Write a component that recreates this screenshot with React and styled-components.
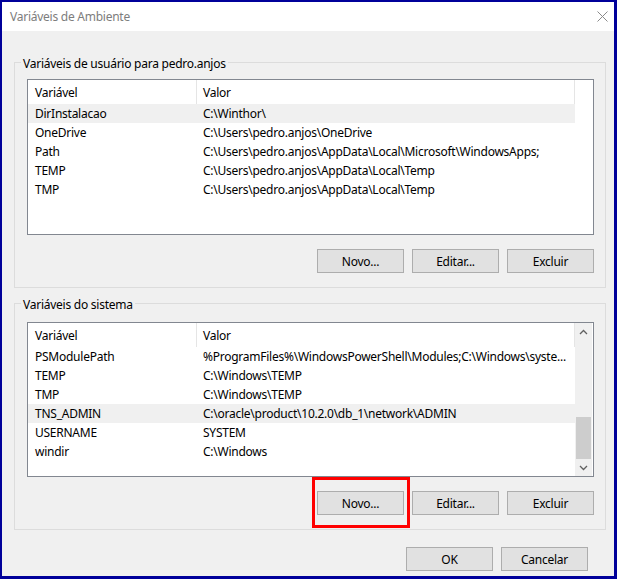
import React from 'react'
import styled, { createGlobalStyle } from 'styled-components'

const GlobalStyle = createGlobalStyle`
  html, body {
    margin: 0;
    padding: 0;
    background: #f0f0f0;
  }
  * {
    box-sizing: border-box;
  }
`

const userVars = [
  { name: 'DirInstalacao', value: 'C:\\Winthor\\', selected: true },
  { name: 'OneDrive', value: 'C:\\Users\\pedro.anjos\\OneDrive' },
  { name: 'Path', value: 'C:\\Users\\pedro.anjos\\AppData\\Local\\Microsoft\\WindowsApps;' },
  { name: 'TEMP', value: 'C:\\Users\\pedro.anjos\\AppData\\Local\\Temp' },
  { name: 'TMP', value: 'C:\\Users\\pedro.anjos\\AppData\\Local\\Temp' },
]

const systemVars = [
  { name: 'PSModulePath', value: '%ProgramFiles%\\WindowsPowerShell\\Modules;C:\\Windows\\syste...' },
  { name: 'TEMP', value: 'C:\\Windows\\TEMP' },
  { name: 'TMP', value: 'C:\\Windows\\TEMP' },
  { name: 'TNS_ADMIN', value: 'C:\\oracle\\product\\10.2.0\\db_1\\network\\ADMIN', selected: true },
  { name: 'USERNAME', value: 'SYSTEM' },
  { name: 'windir', value: 'C:\\Windows' },
]

const Chevron = ({ down }) => (
  <svg width="9" height="6" viewBox="0 0 9 6">
    <polyline
      points={down ? '1,1 4.5,4.5 8,1' : '1,5 4.5,1.5 8,5'}
      fill="none"
      stroke="#606060"
      strokeWidth="1.3"
    />
  </svg>
)

const VarList = ({ rows, height, scroll }) => (
  <ListView $height={height}>
    <Table>
      <Header>
        <HeadCell $first>Variável</HeadCell>
        <HeadCell>Valor</HeadCell>
      </Header>
      {rows.map((r, i) => (
        <Row key={i} $selected={r.selected}>
          <Cell $first>{r.name}</Cell>
          <Cell>{r.value}</Cell>
        </Row>
      ))}
    </Table>
    <ScrollBar $visible={scroll}>
      {scroll && (
        <>
          <ArrowBtn>
            <Chevron />
          </ArrowBtn>
          <Track />
          <Thumb />
          <ArrowBtn>
            <Chevron down />
          </ArrowBtn>
        </>
      )}
    </ScrollBar>
  </ListView>
)

const App = () => {
  return (
    <>
      <GlobalStyle />
      <Window>
        <TitleBar>
          <Title>Variáveis de Ambiente</Title>
          <svg width="11" height="11" viewBox="0 0 11 11">
            <path d="M0.5 0.5 L10.5 10.5 M10.5 0.5 L0.5 10.5" stroke="#8a8a8a" strokeWidth="1" />
          </svg>
        </TitleBar>
        <Content>
          <Group>
            <Legend>Variáveis de usuário para pedro.anjos</Legend>
            <ListGap $size={9} />
            <VarList rows={userVars} height={156} />
            <ButtonRow>
              <Button>Novo...</Button>
              <Button>Editar...</Button>
              <Button>Excluir</Button>
            </ButtonRow>
          </Group>
          <Group $top={7}>
            <Legend>Variáveis do sistema</Legend>
            <ListGap $size={11} />
            <VarList rows={systemVars} height={155} scroll />
            <ButtonRow>
              <Marked>
                <Button>Novo...</Button>
                <RedBox />
              </Marked>
              <Button>Editar...</Button>
              <Button>Excluir</Button>
            </ButtonRow>
          </Group>
          <Footer>
            <Button>OK</Button>
            <Button>Cancelar</Button>
          </Footer>
        </Content>
      </Window>
    </>
  )
}

const Window = styled.div`
  width: 617px;
  height: 579px;
  border-style: solid;
  border-color: #00009a;
  border-width: 2px 3px 3px 2px;
  background: #f0f0f0;
  display: flex;
  flex-direction: column;
  font-family: 'Noto Sans', 'Open Sans', sans-serif;
  font-size: 12px;
  letter-spacing: -0.25px;
  color: #000;
`

const TitleBar = styled.div`
  height: 29px;
  background: #fff;
  display: flex;
  align-items: center;
  justify-content: space-between;
  padding: 0 6px 0 8px;
`

const Title = styled.span`
  color: #7d7d7d;
  font-size: 12px;
`

const Content = styled.div`
  padding: 23px 8px 0 12px;
  display: flex;
  flex-direction: column;
`

const Group = styled.fieldset`
  margin: ${(p) => p.$top || 0}px 0 0;
  border: 1px solid #dcdcdc;
  padding: 0 11px 14px 12px;
  min-width: 0;
`

const Legend = styled.legend`
  margin-left: -6px;
  padding: 0 2px;
  height: 16px;
  line-height: 19px;
`

const ListGap = styled.div`
  height: ${(p) => p.$size}px;
`

const ListView = styled.div`
  height: ${(p) => p.$height}px;
  border: 1px solid #828790;
  background: #fff;
  display: flex;
  overflow: hidden;
`

const Table = styled.div`
  width: 547px;
  display: flex;
  flex-direction: column;
`

const Header = styled.div`
  height: 24px;
  display: flex;
  align-items: center;
  border-right: 1px solid #e5e5e5;
`

const HeadCell = styled.div`
  height: 100%;
  display: flex;
  align-items: center;
  padding-left: ${(p) => (p.$first ? 7 : 6)}px;
  ${(p) => (p.$first ? 'width: 169px; border-right: 1px solid #e5e5e5;' : 'flex: 1;')}
`

const Row = styled.div`
  height: 19px;
  line-height: 20px;
  display: flex;
  align-items: center;
  background: ${(p) => (p.$selected ? '#f0f0f0' : 'transparent')};
`

const Cell = styled.div`
  padding-left: ${(p) => (p.$first ? 7 : 6)}px;
  white-space: nowrap;
  overflow: hidden;
  ${(p) => (p.$first ? 'width: 169px;' : 'flex: 1; min-width: 0;')}
`

const ScrollBar = styled.div`
  width: 17px;
  margin-right: 1px;
  display: flex;
  flex-direction: column;
  background: ${(p) => (p.$visible ? '#f0f0f0' : '#fff')};
`

const ArrowBtn = styled.div`
  height: 17px;
  display: flex;
  align-items: center;
  justify-content: center;
`

const Track = styled.div`
  flex: 1;
`

const Thumb = styled.div`
  height: 42px;
  margin: 0 1px;
  background: #cdcdcd;
`

const ButtonRow = styled.div`
  margin-top: 14px;
  display: flex;
  justify-content: flex-end;
  gap: 8px;
`

const Button = styled.button`
  width: 87px;
  height: 24px;
  padding: 0;
  border: 1px solid #adadad;
  background: #e1e1e1;
  font-family: inherit;
  font-size: 12px;
  letter-spacing: inherit;
  color: #000;
`

const Marked = styled.div`
  position: relative;
  display: flex;
`

const RedBox = styled.div`
  position: absolute;
  left: -5px;
  top: -14px;
  width: 98px;
  height: 51px;
  border: 3px solid #ff0000;
  pointer-events: none;
`

const Footer = styled.div`
  margin-top: 17px;
  padding-right: 18px;
  display: flex;
  justify-content: flex-end;
  gap: 8px;
`

export default App
